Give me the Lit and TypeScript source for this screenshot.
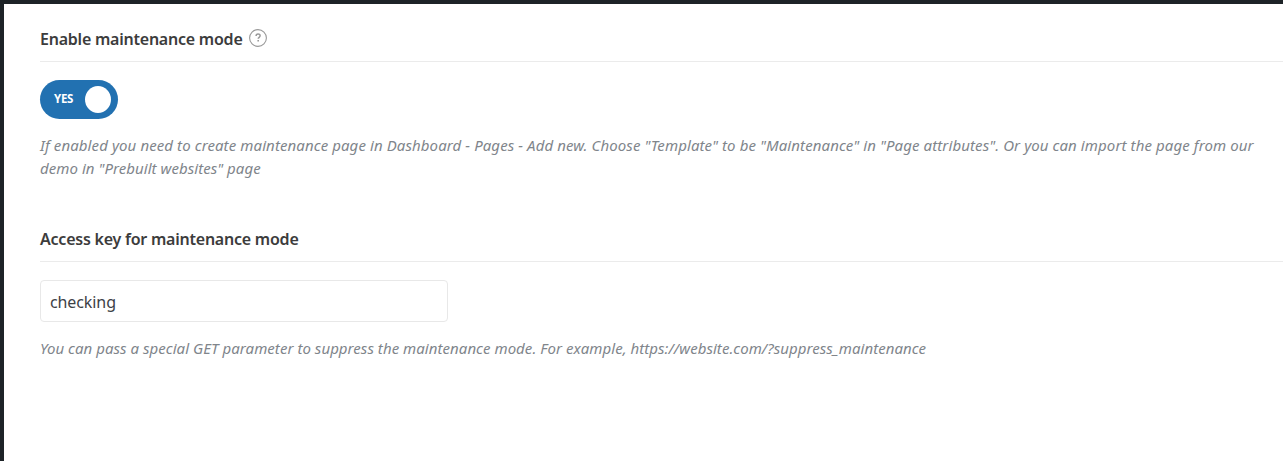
import { LitElement, html, css } from 'lit';
import { customElement, property, state } from 'lit/decorators.js';

@customElement('option-field')
export class OptionField extends LitElement {
  @property({ type: String }) label = '';
  @property({ type: Boolean }) hint = false;

  static styles = css`
    :host {
      display: block;
    }

    .title {
      display: flex;
      align-items: center;
      gap: 6px;
      height: 45px;
      box-sizing: border-box;
      border-bottom: 1px solid #ebebeb;
      margin-bottom: 18px;
      color: #3c3c3c;
      font-size: 16px;
      font-weight: 600;
    }

    .text {
      white-space: nowrap;
      letter-spacing: -0.23px;
    }

    .hint {
      width: 18px;
      height: 18px;
      margin-bottom: 2px;
    }
  `;

  render() {
    return html`
      <div class="title">
        <span class="text">${this.label}</span>
        ${this.hint
          ? html`
              <svg class="hint" viewBox="0 0 18 18" fill="none" stroke="#999">
                <circle cx="9" cy="9" r="8.4" stroke-width="1.1" />
                <path d="M7.1 6.9c0-2.5 4-2.5 4-.1 0 1.5-1.9 1.5-1.9 3" stroke-width="1.5" />
                <path d="M9.2 11v1.6" stroke-width="1.6" />
              </svg>
            `
          : ''}
      </div>
      <slot></slot>
    `;
  }
}

@customElement('app-root')
export class AppRoot extends LitElement {
  @state() enabled = true;
  @state() accessKey = 'checking';

  static styles = css`
    :host {
      display: block;
      box-sizing: border-box;
      height: 461px;
      padding: 13px 0 0 36px;
      overflow: hidden;
      border-top: 4px solid #1d2327;
      border-left: 4px solid #1d2327;
      background: #fff;
      font-family: 'Noto Sans', 'Open Sans', sans-serif;
    }

    .switch {
      display: flex;
      align-items: center;
      justify-content: space-between;
      box-sizing: border-box;
      width: 78px;
      height: 39px;
      padding: 0 7px 0 14px;
      border: none;
      border-radius: 20px;
      background: #2271b1;
      color: #fff;
      font-family: inherit;
      font-size: 11.5px;
      font-weight: 700;
      letter-spacing: -0.3px;
      cursor: pointer;
    }

    .state {
      padding-bottom: 2px;
    }

    .knob {
      width: 26px;
      height: 27px;
      border-radius: 50%;
      background: #fff;
    }

    .description {
      margin: 15px 0 0;
      color: #80858b;
      font-size: 15px;
      font-style: italic;
      line-height: 23px;
    }

    .line {
      display: block;
      width: max-content;
      white-space: nowrap;
      letter-spacing: 0.05px;
    }

    .first {
      letter-spacing: 0.1px;
    }

    .key {
      margin-top: 37px;
    }

    input {
      display: block;
      box-sizing: border-box;
      width: 408px;
      height: 42px;
      padding: 2px 9px 0;
      border: 1px solid #e8e8e8;
      border-radius: 4px;
      outline: none;
      background: #fff;
      color: #3c4146;
      font-family: inherit;
      font-size: 16px;
      letter-spacing: -0.1px;
    }
  `;

  render() {
    return html`
      <option-field label="Enable maintenance mode" hint>
        <button class="switch" @click=${() => (this.enabled = !this.enabled)}>
          <span class="state">${this.enabled ? 'YES' : 'NO'}</span>
          <span class="knob"></span>
        </button>
        <p class="description">
          <span class="line first">If enabled you need to create maintenance page in Dashboard - Pages - Add new. Choose "Template" to be "Maintenance" in "Page attributes". Or you can import the page from our</span>
          <span class="line">demo in "Prebuilt websites" page</span>
        </p>
      </option-field>

      <option-field class="key" label="Access key for maintenance mode">
        <input type="text" .value=${this.accessKey} />
        <p class="description">
          <span class="line">You can pass a special GET parameter to suppress the maintenance mode. For example, https://website.com/?suppress_maintenance</span>
        </p>
      </option-field>
    `;
  }
}
